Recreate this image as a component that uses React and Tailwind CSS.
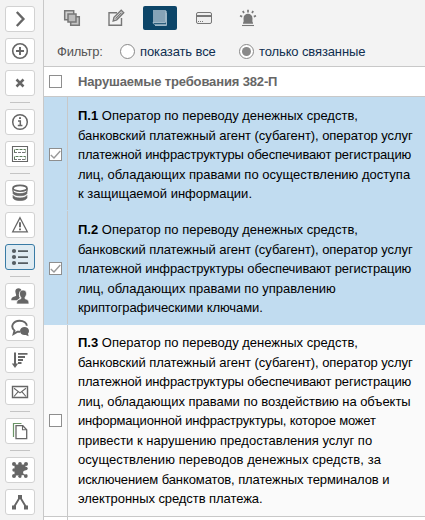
import React from "react";

const G = "#666";

function Ico({ children, w = 18, h = 18, color = G }) {
  return (
    <svg width={w} height={h} viewBox={`0 0 ${w} ${h}`} fill="none" stroke={color} strokeWidth="1.3" className="shrink-0">
      {children}
    </svg>
  );
}

const icons = {
  chevron: <Ico><path d="M5.800 2l6.600 7-6.600 7" strokeWidth="2.400" /></Ico>,
  plus: <Ico><circle cx="9" cy="9" r="7.300" strokeWidth="1.600" /><path d="M9 5v8M5 9h8" strokeWidth="1.900" /></Ico>,
  close: <Ico><path d="M5.500 5.500l7 7M12.500 5.500l-7 7" strokeWidth="2.500" /></Ico>,
  info: <Ico><circle cx="9" cy="9" r="7.300" strokeWidth="1.500" /><path d="M7 8h2.300v4.400M6.800 12.600h4.600" strokeWidth="1.500" /><path d="M8 4.200h2v1.900H8z" fill={G} stroke="none" /></Ico>,
  grid: (
    <Ico>
      <path d="M1.500 1.500h15v15h-15z" strokeWidth="1.100" />
      <path d="M3.500 7.500v-3h11v3" stroke="#5a7a58" strokeWidth="1" strokeDasharray="3 1" />
      <path d="M3 7.500h12" stroke="#777" strokeWidth="1" strokeDasharray="3 1" />
      <path d="M3.500 14.500v-3h11v3" stroke="#5a7a58" strokeWidth="1" strokeDasharray="3 1" />
      <path d="M3 14.500h12" stroke="#777" strokeWidth="1" strokeDasharray="3 1" />
    </Ico>
  ),
  database: (
    <Ico>
      <ellipse cx="9" cy="4.300" rx="7" ry="2.900" strokeWidth="1.600" />
      <path d="M2 7.100c1.200 3.300 12.800 3.300 14 0v2.300c-1.200 3.200-12.800 3.200-14 0zM2 11.400c1.200 3.300 12.800 3.300 14 0V14c-1.200 3.400-12.800 3.400-14 0z" fill={G} strokeWidth=".6" />
      <path d="M2 4.300v3M16 4.300v3" strokeWidth="1.300" />
    </Ico>
  ),
  warning: <Ico><path d="M9 1.700l7.300 14.100H1.700z" strokeWidth="1.300" /><path d="M9 6.300v5M9 12.500v1.800" strokeWidth="1.900" /></Ico>,
  list: (
    <Ico>
      <g fill="#555d62" stroke="none">
        <circle cx="3" cy="3" r="2.100" /><circle cx="3" cy="9" r="2.100" /><circle cx="3" cy="15" r="2.100" />
        <path d="M7 2.200h10v1.800H7zM7 8.200h10v1.800H7zM7 14.200h10v1.800H7z" />
      </g>
    </Ico>
  ),
  users: (
    <Ico>
      <g fill={G} stroke="none">
        <path d="M4.300 4.200c0-4 6.400-4 6.400 0L9 5c-1.700 1.600-1.400 4-.1 6l-3 2.300H.3c0-2.900 1-3.200 4.600-4.400C5.800 8 4.300 6.500 4.300 4.200z" />
        <path d="M8.500 6.300c0-4.400 7-4.400 7 0 0 2.100-.8 3.100-1.500 4.100v1.300c3 .9 4 1.600 4 5.300H5.600c0-3.700 1.200-4.400 4.300-5.300v-1.300C9 9.400 8.500 8.200 8.500 6.300z" stroke="#fff" strokeWidth=".7" />
      </g>
    </Ico>
  ),
  chat: (
    <Ico>
      <path d="M9 12.700H6.500L2.600 15l.9-3.400C-1.200 7.500 2.300 1.700 8.500 1.700c4.400 0 7.300 2.300 7.300 5" strokeWidth="1.900" />
      <path d="M18 12c0-5.400-9-5.400-9 0 0 3.200 3.200 4.600 5.800 3.900l2.800 1.400-.6-2.700c.6-.7 1-1.500 1-2.600z" fill={G} stroke="none" />
    </Ico>
  ),
  sort: <Ico><path d="M4 1.500v13" strokeWidth="2" /><path d="M.8 12.500h6.400L4 17z" fill={G} stroke="none" /><path d="M7 2.900h9.500M7 6h7M7 9h5M7 12h3.500" strokeWidth="1.900" /></Ico>,
  mail: <Ico><path d="M1.500 3.500h15v11h-15z" strokeWidth="1.400" /><path d="M3 5.200l6 4.700 6-4.700M3 13.500l4-4.700M15 13.500l-4-4.700" strokeWidth="1.100" /></Ico>,
  copy: <Ico><path d="M5 3.700h6.800l3.900 4v9H5z" strokeWidth="1.300" /><path d="M11.500 3.700v4.100h4" strokeWidth="1.100" /><path d="M2.500 15V1.500h8" stroke="#6b9466" strokeWidth="1.200" /></Ico>,
  puzzle: (
    <Ico>
      <g fill={G} stroke="none">
        <path d="M3.500 3.500h11v11h-11z" />
        <circle cx="3" cy="3" r="2" /><circle cx="9" cy="3" r="1.900" />
        <circle cx="15" cy="3" r="2" /><circle cx="3" cy="15" r="2" />
        <circle cx="3" cy="9" r="1.700" /><circle cx="9" cy="15.200" r="1.700" />
        <circle cx="14.800" cy="15" r="1.900" /><circle cx="15" cy="7.500" r="1.700" />
      </g>
      <circle cx="14" cy="11.500" r="1.900" fill="#fff" stroke="none" />
      <circle cx="11.800" cy="15.500" r="1.200" fill="#fff" stroke="none" />
    </Ico>
  ),
  graph: (
    <Ico>
      <path d="M3 14L9 4l6 10" strokeWidth="1.900" />
      <path d="M7 2h4v4H7zM1 12.500h4v4H1zM13 12.500h4v4h-4z" fill={G} stroke="none" />
    </Ico>
  ),
};

const groups = [
  ["chevron", "plus", "close"],
  ["info", "grid"],
  ["database", "warning", "list"],
  ["users", "chat", "sort", "mail"],
  ["copy"],
  ["puzzle", "graph"],
];

function Sidebar() {
  return (
    <aside className="flex h-full w-[44px] shrink-0 flex-col gap-1.5 border-r border-[#c8c8c8] bg-[#f3f3f3] pl-[5px] pt-1.5">
      {groups.map((group, i) => (
        <React.Fragment key={i}>
          {i > 0 && <div className="ml-[5px] h-px w-5 shrink-0 bg-[#c4c4c4]" />}
          {group.map((name) => (
            <button
              key={name}
              className={
                "flex h-[26px] w-[30px] shrink-0 items-center justify-center rounded-[3px] border " +
                (name === "list" ? "border-[#397ba5] bg-[#dfebf2]" : "border-[#d2d2d2] bg-white")
              }
            >
              {icons[name]}
            </button>
          ))}
        </React.Fragment>
      ))}
    </aside>
  );
}

function Toolbar() {
  const c = "#777";
  return (
    <div className="flex h-9 shrink-0 items-center pl-[11px]">
      <div className="flex w-[34px] justify-center">
        <Ico color={c}>
          <path d="M1.700 1.700h9v9h-9z" fill="#d0d0d0" strokeWidth="1.500" />
          <path d="M7.700 7.700h8.600v8.600H7.700z" fill="#c4c4c4" strokeWidth="1.500" />
          <path d="M5 5h8v8H5z" fill="#bbb" strokeWidth="1.500" />
        </Ico>
      </div>
      <div className="ml-[10px] flex w-[34px] justify-center">
        <Ico color={c}>
          <path d="M10 3.700H2v12.500h12.500V9" strokeWidth="1.400" />
          <path d="M6.200 12l.8-3.700 7.200-7 2.500 2.500-7 7z" fill="#e9e9e9" strokeWidth="1.400" />
          <path d="M8.500 9.700l6-6" strokeWidth="1.200" />
        </Ico>
      </div>
      <div className="ml-[10px] flex h-6 w-[34px] items-center justify-center rounded-[2px] bg-[#0c4568]">
        <Ico color="#9eb7c7">
          <path d="M2 1h12v12.500H2z" fill="#86a3b7" stroke="none" />
          <path d="M14.500 1.500c1 .5 1 1 1 2v11.800H4c-1 0-1.800-.6-2-1.800h12.500v-12" strokeWidth="1" />
          <path d="M15.500 14.500v2H4" strokeWidth="1" />
        </Ico>
      </div>
      <div className="ml-[10px] flex w-[34px] justify-center">
        <Ico color={c}>
          <rect x="1.500" y="3.500" width="15" height="11" rx="1.500" fill="#eee" strokeWidth="1" />
          <path d="M1.500 7h15" strokeWidth="2" />
          <path d="M3 12.500h1M5 12.500h1M7 12.500h1" strokeWidth="1.200" />
        </Ico>
      </div>
      <div className="ml-[10px] flex w-[34px] justify-center">
        <Ico color={c}>
          <path d="M4 13.700c1-1 .5-2.200.5-4.200 0-6.200 9-6.200 9 0 0 2-.5 3.200.5 4.200v1H4z" fill={c} stroke="none" />
          <path d="M3 16.500h12" strokeWidth="1.100" />
          <path d="M9 .8v2.700M3.800 2l1.200 2M14.200 2L13 4M1 6.800l2.200.8M17 6.800l-2.200.8" strokeWidth="1.700" />
        </Ico>
      </div>
    </div>
  );
}

function Radio({ checked, children }) {
  return (
    <label className="flex items-center gap-[5px] text-[#0f2f50]">
      <span className="flex size-[15px] shrink-0 items-center justify-center rounded-full border border-[#888] bg-white">
        {checked && <span className="size-[9px] rounded-full bg-[#8a8a8a]" />}
      </span>
      <span className="whitespace-nowrap tracking-[-0.12px]">{children}</span>
    </label>
  );
}

function Check({ checked }) {
  return (
    <span className="flex size-[13px] shrink-0 items-center justify-center border border-[#8e8e8e] bg-white">
      {checked && (
        <svg width="11" height="11" viewBox="0 0 11 11" fill="none" stroke="#999" strokeWidth="1.400">
          <path d="M.8 6L4 9l6.300-7" />
        </svg>
      )}
    </span>
  );
}

const common = [
  ["Оператор по переводу денежных средств,", ""],
  ["банковский платежный агент (субагент), оператор услуг", "tracking-[-0.05px]"],
  ["платежной инфраструктуры обеспечивают регистрацию", "tracking-[-0.13px]"],
];

const rows = [
  {
    id: "П.1",
    on: true,
    lines: [...common, ["лиц, обладающих правами по осуществлению доступа", ""], ["к защищаемой информации.", ""]],
  },
  {
    id: "П.2",
    on: true,
    lines: [...common, ["лиц, обладающих правами по управлению", ""], ["криптографическими ключами.", "tracking-[-0.1px]"]],
  },
  {
    id: "П.3",
    on: false,
    lines: [
      ...common,
      ["лиц, обладающих правами по воздействию на объекты", "tracking-[-0.04px]"],
      ["информационной инфраструктуры, которое может", "tracking-[-0.2px]"],
      ["привести к нарушению предоставления услуг по", "tracking-[0.02px]"],
      ["осуществлению переводов денежных средств, за", "tracking-[0.07px]"],
      ["исключением банкоматов, платежных терминалов и", "tracking-[-0.1px]"],
      ["электронных средств платежа.", "tracking-[-0.07px]"],
    ],
  },
];

function Row({ id, on, lines }) {
  return (
    <div className={"flex shrink-0 border-b " + (on ? "h-[114px] border-[#c1dcf0] bg-[#c1dcf0]" : "h-[192px] border-[#c8c8c8] bg-[#fafafa]")}>
      <div className={"flex w-6 shrink-0 items-center border-r border-[#c8c8c8] pl-[5px] " + (on ? "pt-0.5" : "")}>
        <Check checked={on} />
      </div>
      <div className={"pl-[10px] text-[13px] leading-[19.5px] text-black " + (on ? "pt-[9px]" : "pt-2")}>
        {lines.map(([text, tracking], i) => (
          <div key={i} className={"whitespace-nowrap " + tracking}>
            {i === 0 && <b>{id} </b>}
            {text}
          </div>
        ))}
      </div>
    </div>
  );
}

export default function App() {
  return (
    <div className="flex h-[520px] w-[425px] overflow-hidden bg-[#f3f3f3] font-['Liberation_Sans',Arial,sans-serif] text-[13px]">
      <Sidebar />
      <main className="flex min-w-0 flex-1 flex-col overflow-hidden">
        <Toolbar />
        <div className="flex h-[30px] shrink-0 items-center pl-[13px] pt-px text-[#555]">
          <span className="w-[63px] pt-px tracking-[-0.25px]">Фильтр:</span>
          <div className="w-[119px]"><Radio>показать все</Radio></div>
          <Radio checked>только связанные</Radio>
        </div>
        <div className="flex h-[31px] shrink-0 items-center border-y border-[#c8c8c8] bg-white pl-[5px]">
          <Check />
          <span className="ml-4 text-[13px] font-bold tracking-[-0.14px] text-[#666]">Нарушаемые требования 382-П</span>
        </div>
        {rows.map((r) => (
          <Row key={r.id} {...r} />
        ))}
        <div className="flex flex-1 bg-white">
          <div className="w-6 border-r border-[#c8c8c8]" />
        </div>
      </main>
    </div>
  );
}
